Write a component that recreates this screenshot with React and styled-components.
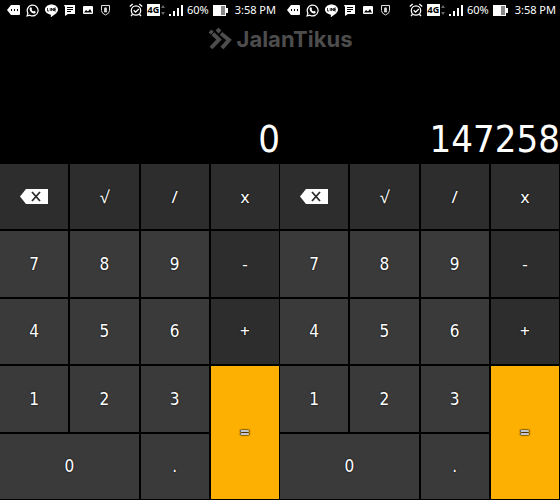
import React, { useState } from 'react'
import styled, { createGlobalStyle, css } from 'styled-components'

const GlobalStyle = createGlobalStyle`
  * {
    box-sizing: border-box;
  }
  body {
    margin: 0;
    background: #000;
    color: #fff;
    font-family: 'Noto Sans', 'Open Sans', sans-serif;
  }
`

const Page = styled.main`
  position: relative;
  display: grid;
  grid-template-columns: 1fr 1fr;
  min-height: 100vh;
`

const Phone = styled.section`
  display: flex;
  flex-direction: column;
  min-width: 0;
`

const StatusBar = styled.header`
  display: flex;
  align-items: center;
  justify-content: space-between;
  height: 20px;
  padding: 0 4px 0 7px;
`

const Notifications = styled.div`
  display: flex;
  align-items: center;
  gap: 6px;
`

const SystemInfo = styled.div`
  display: flex;
  align-items: center;
  gap: 4px;
`

const Icon = styled.svg`
  display: block;
  flex: none;
`

const StatusText = styled.span`
  font-size: 11px;
  line-height: 20px;
  white-space: nowrap;
`

const Clock = styled(StatusText).attrs({ as: 'time' })`
  margin-left: 2px;
`

const Display = styled.output`
  display: flex;
  align-items: flex-end;
  justify-content: flex-end;
  height: 144px;
  padding-bottom: 1px;
  font-family: 'DejaVu Sans Condensed', 'DejaVu Sans', sans-serif;
  font-size: 38px;
  line-height: 48px;
  overflow: hidden;
`

const Keypad = styled.div`
  display: grid;
  flex: 1;
  grid-template-columns: repeat(4, 1fr);
  grid-template-rows: repeat(5, minmax(48px, 1fr));
  gap: 2px;
  padding: 0 1px 1px 0;
`

const Key = styled.button`
  display: flex;
  align-items: center;
  justify-content: center;
  padding: 0;
  border: none;
  background: #3a3a3a;
  color: #fff;
  font-family: 'DejaVu Sans Condensed', 'DejaVu Sans', sans-serif;
  font-size: 17px;
  line-height: 20px;
  text-shadow: 0 0 2px #000;
  cursor: pointer;

  ${({ $kind }) =>
    $kind === 'operator' &&
    css`
      background: #2d2d2d;
      font-family: 'Noto Sans', 'Open Sans', sans-serif;
    `}

  ${({ $kind }) =>
    $kind === 'equals' &&
    css`
      grid-row: span 2;
      background: #fdb002;
      color: #c4c4cc;
      font-family: 'Noto Sans', 'Open Sans', sans-serif;
      font-weight: 700;
      text-shadow: 0 0 1px #000, 0 0 1px #000, 0 0 2px #000;
    `}

  ${({ $wide }) =>
    $wide &&
    css`
      grid-column: span 2;
    `}

  &:active {
    filter: brightness(120%);
  }
`

const Watermark = styled.div`
  position: absolute;
  top: 25px;
  left: 0;
  right: 0;
  display: flex;
  align-items: center;
  justify-content: center;
  gap: 3px;
  pointer-events: none;
`

const Brand = styled.span`
  color: #4d4d4d;
  font-family: Inter, 'Open Sans', sans-serif;
  font-size: 22px;
  font-weight: 700;
  line-height: 28px;
`

const TagIcon = () => (
  <Icon width="13" height="12" viewBox="0 0 13 12" aria-hidden="true">
    <path d="M0 6 4 1h8q1 0 1 1v8q0 1-1 1H4z" fill="#fff" />
    <path d="M4 5h1v2H4zM7 5h1v2H7zM10 5h1v2h-1z" fill="#000" />
  </Icon>
)

const WhatsappIcon = () => (
  <Icon width="13" height="13" viewBox="0 0 24 24" aria-hidden="true">
    <path
      d="M2 22l1.5-5.2A10 10 0 1 1 7.300 20.700z"
      fill="none"
      stroke="#fff"
      strokeWidth="2.300"
    />
    <path
      d="M8 6.500 9.800 6l1.400 3.400-1 1.300c.8 1.500 1.900 2.500 3.400 3.200l1.300-1.300 3.100 1.500c.2 2.500-1.800 3.600-3.700 3.300-3.800-.6-7.300-4.200-7.700-7.400C6.400 8.600 7 7.300 8 6.500z"
      fill="#fff"
    />
  </Icon>
)

const LineIcon = () => (
  <Icon width="13" height="13" viewBox="0 0 26 26" aria-hidden="true">
    <path
      d="M13 1C6 1 0 5.500 0 11.200c0 5 4.500 9 10.600 9.800 1.600.3 1.200 1.500.9 4 0 1 .8 1 1.800.4C18 22.500 26 18 26 11.200 26 5.500 20 1 13 1z"
      fill="#fff"
    />
    <path
      d="M5 8v6h3M10.500 8v6M13 14V8l4 6V8M22 8h-3v6h3M19 11h3"
      fill="none"
      stroke="#000"
      strokeWidth="1.500"
    />
  </Icon>
)

const MessageIcon = () => (
  <Icon width="12" height="12" viewBox="0 0 12 12" aria-hidden="true">
    <path d="M0 1h11v9H4l-3 2V3z" fill="#fff" />
    <path d="M3 3.500h6M3 5.500h6M3 7.500h4" stroke="#000" />
  </Icon>
)

const ImageIcon = () => (
  <Icon width="12" height="10" viewBox="0 0 12 10" aria-hidden="true">
    <rect x="1" y="1" width="10" height="8" rx="1" fill="#fff" />
    <path d="M2 7.500 4 5l2 1.500L8 4l2 3.500z" fill="#000" />
  </Icon>
)

const ShieldIcon = () => (
  <Icon width="11" height="12" viewBox="0 0 11 12" aria-hidden="true">
    <path
      d="M1.500 1.500h8v5q0 3-4 4.500-4-1.500-4-4.500z"
      fill="none"
      stroke="#ddd"
    />
    <circle cx="5.500" cy="4.700" r="1.500" fill="#ddd" />
    <path d="M4.500 5h2l.7 3.200H3.800z" fill="#ddd" />
  </Icon>
)

const AlarmIcon = () => (
  <Icon width="14" height="14" viewBox="0 0 14 14" aria-hidden="true">
    <g fill="none" stroke="#fff" strokeWidth="1.300">
      <circle cx="7" cy="7.500" r="4.700" />
      <path d="M.8 3.500 3.700 1M10.300 1l2.900 2.500M3.600 11.200 2 13M10.400 11.200 12 13M4.700 7.300l1.900 1.900 3.200-3.200" />
    </g>
  </Icon>
)

const Network = styled.span`
  display: flex;
  align-items: center;
  gap: 1px;
`

const NetworkBadge = styled.span`
  width: 13px;
  background: #fff;
  color: #000;
  font-size: 9px;
  font-weight: 700;
  line-height: 12px;
  text-align: center;
`

const ArrowsIcon = () => (
  <Icon width="4" height="12" viewBox="0 0 4 12" aria-hidden="true">
    <path d="M0 4 2 1l2 3zM0 8h4l-2 3z" fill="#666" />
  </Icon>
)

const SignalIcon = () => (
  <Icon width="14" height="12" viewBox="0 0 14 12" aria-hidden="true">
    <path d="M0 10h2v2H0zM4 7h2v5H4zM8 4h2v8H8zM12 1h2v11h-2z" fill="#fff" />
  </Icon>
)

const BatteryIcon = () => (
  <Icon width="16" height="11" viewBox="0 0 16 11" aria-hidden="true">
    <path d="M0 0h13v3h2v5h-2v3H0z" fill="#fff" />
    <path d="M8 1h4v9H8z" fill="#888" />
  </Icon>
)

const BackspaceIcon = () => (
  <Icon width="28" height="15" viewBox="0 0 28 15" aria-hidden="true">
    <path d="M0 7.500 6 0h22v15H6z" fill="#fff" />
    <path d="m12 3 8 9m0-9-8 9" stroke="#2d2d2d" strokeWidth="1.800" />
  </Icon>
)

const BrandMark = () => (
  <Icon width="26" height="24" viewBox="0 0 26 24" aria-hidden="true">
    <g fill="none" stroke="#4d4d4d" strokeWidth="4">
      <path d="m2 4 9 8.500L3 21" />
      <path d="m9 2 3 3M13 6.500l8 6.500-7 8" />
    </g>
    <path d="m2 9 5-5M11 17l4-4" stroke="#000" />
  </Icon>
)

const keys = [
  { label: 'Delete', kind: 'operator', icon: <BackspaceIcon /> },
  { label: '√', kind: 'operator' },
  { label: '/', kind: 'operator' },
  { label: 'x', kind: 'operator' },
  { label: '7' },
  { label: '8' },
  { label: '9' },
  { label: '-', kind: 'operator' },
  { label: '4' },
  { label: '5' },
  { label: '6' },
  { label: '+', kind: 'operator' },
  { label: '1' },
  { label: '2' },
  { label: '3' },
  { label: '=', kind: 'equals' },
  { label: '0', wide: true },
  { label: '.' },
]

const Calculator = ({ initialValue }) => {
  const [value, setValue] = useState(initialValue)

  const handlePress = ({ label, kind }) => {
    if (label === 'Delete') {
      setValue(value.slice(0, -1) || '0')
    } else if (!kind) {
      setValue(value === '0' && label !== '.' ? label : value + label)
    }
  }

  return (
    <Phone>
      <StatusBar>
        <Notifications>
          <TagIcon />
          <WhatsappIcon />
          <LineIcon />
          <MessageIcon />
          <ImageIcon />
          <ShieldIcon />
        </Notifications>
        <SystemInfo>
          <AlarmIcon />
          <Network>
            <NetworkBadge>4G</NetworkBadge>
            <ArrowsIcon />
          </Network>
          <SignalIcon />
          <StatusText>60%</StatusText>
          <BatteryIcon />
          <Clock>3:58 PM</Clock>
        </SystemInfo>
      </StatusBar>
      <Display>{value}</Display>
      <Keypad>
        {keys.map((key) => (
          <Key
            key={key.label}
            type="button"
            $kind={key.kind}
            $wide={key.wide}
            aria-label={key.icon ? key.label : undefined}
            onClick={() => handlePress(key)}
          >
            {key.icon || key.label}
          </Key>
        ))}
      </Keypad>
    </Phone>
  )
}

const App = () => (
  <Page>
    <GlobalStyle />
    <Calculator initialValue="0" />
    <Calculator initialValue="147258" />
    <Watermark>
      <BrandMark />
      <Brand>JalanTikus</Brand>
    </Watermark>
  </Page>
)

export default App
